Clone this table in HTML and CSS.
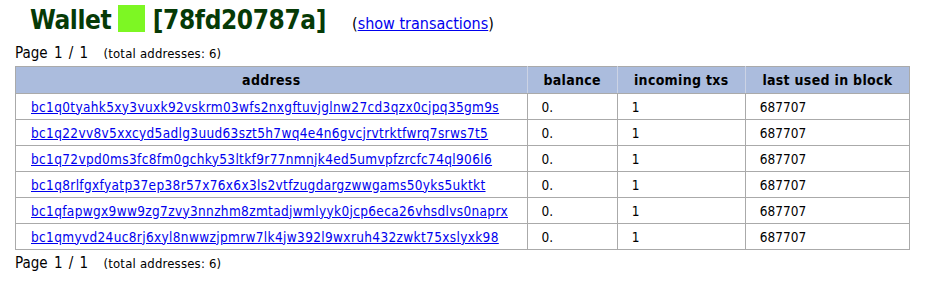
FILE: index.html
```html
<!DOCTYPE html>
<html>
<head>
<meta charset="utf-8">
<link rel="stylesheet" href="styles.css">
</head>
<body>
<div class="title-row">
  <h1 class="title">Wallet <span class="swatch"></span> [78fd20787a]</h1>
  <span class="tx-link">(<a href="#">show transactions</a>)</span>
</div>
<div class="pager">Page 1 / 1 <small>(total addresses: 6)</small></div>
<table class="addr-table">
  <thead>
    <tr><th class="c-addr">address</th><th class="c-bal">balance</th><th class="c-in">incoming txs</th><th class="c-blk">last used in block</th></tr>
  </thead>
  <tbody>
    <tr><td class="c-addr"><a href="#">bc1q0tyahk5xy3vuxk92vskrm03wfs2nxgftuvjglnw27cd3qzx0cjpq35gm9s</a></td><td>0.</td><td>1</td><td>687707</td></tr>
    <tr><td class="c-addr"><a href="#">bc1q22vv8v5xxcyd5adlg3uud63szt5h7wq4e4n6gvcjrvtrktfwrq7srws7t5</a></td><td>0.</td><td>1</td><td>687707</td></tr>
    <tr><td class="c-addr"><a href="#">bc1q72vpd0ms3fc8fm0gchky53ltkf9r77nmnjk4ed5umvpfzrcfc74ql906l6</a></td><td>0.</td><td>1</td><td>687707</td></tr>
    <tr><td class="c-addr"><a href="#">bc1q8rlfgxfyatp37ep38r57x76x6x3ls2vtfzugdargzwwgams50yks5uktkt</a></td><td>0.</td><td>1</td><td>687707</td></tr>
    <tr><td class="c-addr"><a href="#">bc1qfapwgx9ww9zg7zvy3nnzhm8zmtadjwmlyyk0jcp6eca26vhsdlvs0naprx</a></td><td>0.</td><td>1</td><td>687707</td></tr>
    <tr><td class="c-addr"><a href="#">bc1qmyvd24uc8rj6xyl8nwwzjpmrw7lk4jw392l9wxruh432zwkt75xslyxk98</a></td><td>0.</td><td>1</td><td>687707</td></tr>
  </tbody>
</table>
<div class="pager">Page 1 / 1 <small>(total addresses: 6)</small></div>
</body>
</html>
```

FILE: styles.css
```css
html, body {
  margin: 0;
  padding: 0;
  background: #fff;
}
body {
  padding: 0 15px;
  font-family: "DejaVu Sans Condensed", "DejaVu Sans", sans-serif;
  color: #000;
}
.title-row {
  display: flex;
  align-items: baseline;
  padding-left: 15px;
  height: 40px;
}
.title {
  margin: 0;
  font-size: 26px;
  font-weight: bold;
  color: #063a06;
  line-height: 40px;
  letter-spacing: -0.4px;
}
.swatch {
  display: inline-block;
  width: 27px;
  height: 27px;
  background: #7df723;
  vertical-align: -3px;
  margin: 0 0 0 -1px;
}
.tx-link {
  margin-left: 26px;
  font-size: 16px;
}
.tx-link a {
  color: #0000ee;
}
.pager {
  font-size: 15px;
  height: 26px;
  line-height: 26px;
  word-spacing: 2px;
}
.pager small {
  font-size: 13px;
  letter-spacing: 0.2px;
  margin-left: 9px;
  word-spacing: 0;
}
.addr-table {
  border-collapse: collapse;
  width: 895px;
  font-size: 13.5px;
}
.addr-table th {
  background: #abbcdd;
  height: 26px;
  padding: 0;
  font-size: 14px;
  letter-spacing: 0.3px;
  font-weight: bold;
  border: 1px solid #aaa;
  border-left-color: #ccd3e4;
  border-right-color: #ccd3e4;
}
.addr-table th:first-child { border-left-color: #aaa; }
.addr-table th:last-child { border-right-color: #aaa; }
.addr-table td {
  border: 1px solid #aaa;
  height: 25px;
  padding: 0 14px;
  text-align: left;
}
.addr-table td.c-addr { padding-left: 15px; letter-spacing: 0.35px; }
.addr-table a { color: #0000ee; }
.c-addr { width: 481px; }
.c-bal { width: 89px; }
.c-in { width: 127px; }
.c-blk { width: 163px; }
```
